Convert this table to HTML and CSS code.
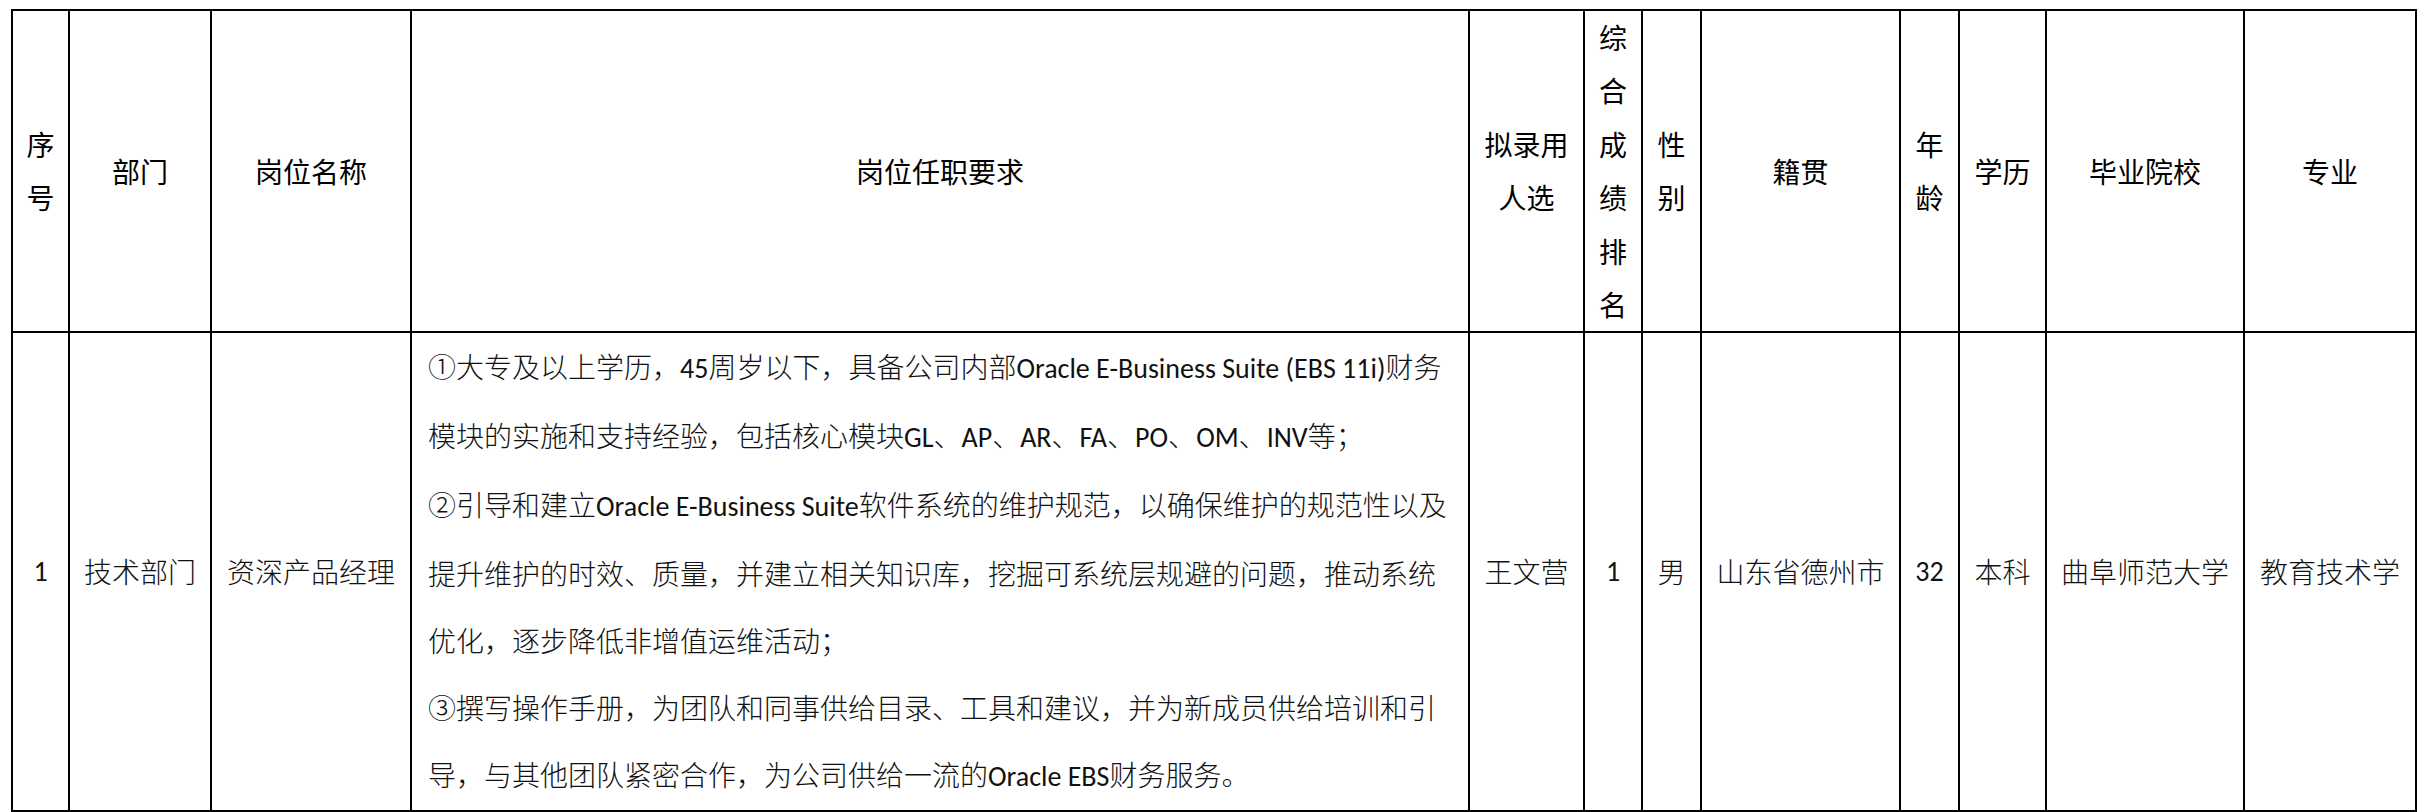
FILE: index.html
```html
<!DOCTYPE html>
<html lang="zh-CN">
<head>
<meta charset="utf-8">
<title>拟录用人选公示</title>
<link rel="stylesheet" href="styles.css">
</head>
<body>
<table class="roster">
  <colgroup>
    <col class="c-no">
    <col class="c-dept">
    <col class="c-title">
    <col class="c-req">
    <col class="c-name">
    <col class="c-rank">
    <col class="c-sex">
    <col class="c-origin">
    <col class="c-age">
    <col class="c-edu">
    <col class="c-school">
    <col class="c-major">
  </colgroup>
  <thead>
    <tr class="head-row">
      <th>序号</th>
      <th>部门</th>
      <th>岗位名称</th>
      <th>岗位任职要求</th>
      <th>拟录用人选</th>
      <th>综合成绩排名</th>
      <th>性别</th>
      <th>籍贯</th>
      <th>年龄</th>
      <th>学历</th>
      <th>毕业院校</th>
      <th>专业</th>
    </tr>
  </thead>
  <tbody>
    <tr class="body-row">
      <td class="num">1</td>
      <td>技术部门</td>
      <td>资深产品经理</td>
      <td class="req">
        <p>①大专及以上学历，<span class="lat">45</span>周岁以下，具备公司内部<span class="lat">Oracle E-Business Suite (EBS 11i)</span>财务<br>模块的实施和支持经验，包括核心模块<span class="lat">GL</span>、<span class="lat">AP</span>、<span class="lat">AR</span>、<span class="lat">FA</span>、<span class="lat">PO</span>、<span class="lat">OM</span>、<span class="lat">INV</span>等；</p>
        <p>②引导和建立<span class="lat">Oracle E-Business Suite</span>软件系统的维护规范，以确保维护的规范性以及<br>提升维护的时效、质量，并建立相关知识库，挖掘可系统层规避的问题，推动系统<br>优化，逐步降低非增值运维活动；</p>
        <p>③撰写操作手册，为团队和同事供给目录、工具和建议，并为新成员供给培训和引<br>导，与其他团队紧密合作，为公司供给一流的<span class="lat">Oracle EBS</span>财务服务。</p>
      </td>
      <td>王文营</td>
      <td class="num">1</td>
      <td>男</td>
      <td>山东省德州市</td>
      <td class="num">32</td>
      <td>本科</td>
      <td>曲阜师范大学</td>
      <td>教育技术学</td>
    </tr>
  </tbody>
</table>
</body>
</html>
```

FILE: styles.css
```css
html, body {
  margin: 0;
  padding: 0;
  background: #ffffff;
}

body {
  padding: 9px 0 0 11px;
}

.roster {
  border-collapse: collapse;
  table-layout: fixed;
  width: 2404px;
  border: 2px solid #000;
  color: #000;
  font-family: "Carlito", "Lato", "Noto Sans CJK SC", sans-serif;
  font-size: 28px;
}

.c-no { width: 57px; }
.c-dept { width: 142px; }
.c-title { width: 200px; }
.c-req { width: 1058px; }
.c-name { width: 115px; }
.c-rank { width: 58px; }
.c-sex { width: 59px; }
.c-origin { width: 199px; }
.c-age { width: 59px; }
.c-edu { width: 87px; }
.c-school { width: 198px; }
.c-major { width: 172px; }

.roster th,
.roster td {
  border: 2px solid #000;
  padding: 0 6px;
  text-align: center;
  vertical-align: middle;
  word-break: break-all;
}

.roster th {
  font-weight: 400;
  font-family: "Noto Sans CJK SC", sans-serif;
  line-height: 53.4px;
  height: 320px;
}

.roster td {
  font-family: "Noto Sans CJK SC", sans-serif;
  font-weight: 300;
  line-height: 67px;
  height: 470px;
  color: #111;
}

.roster td.num {
  font-family: "Carlito", "Lato", "Noto Sans CJK SC", sans-serif;
  font-weight: 400;
}

.lat {
  font-family: "Carlito", "Lato", sans-serif;
  font-weight: 400;
}

.roster td.req {
  text-align: left;
  padding: 0 8px 0 16px;
  white-space: nowrap;
}

.req p {
  margin: 0;
}
```
